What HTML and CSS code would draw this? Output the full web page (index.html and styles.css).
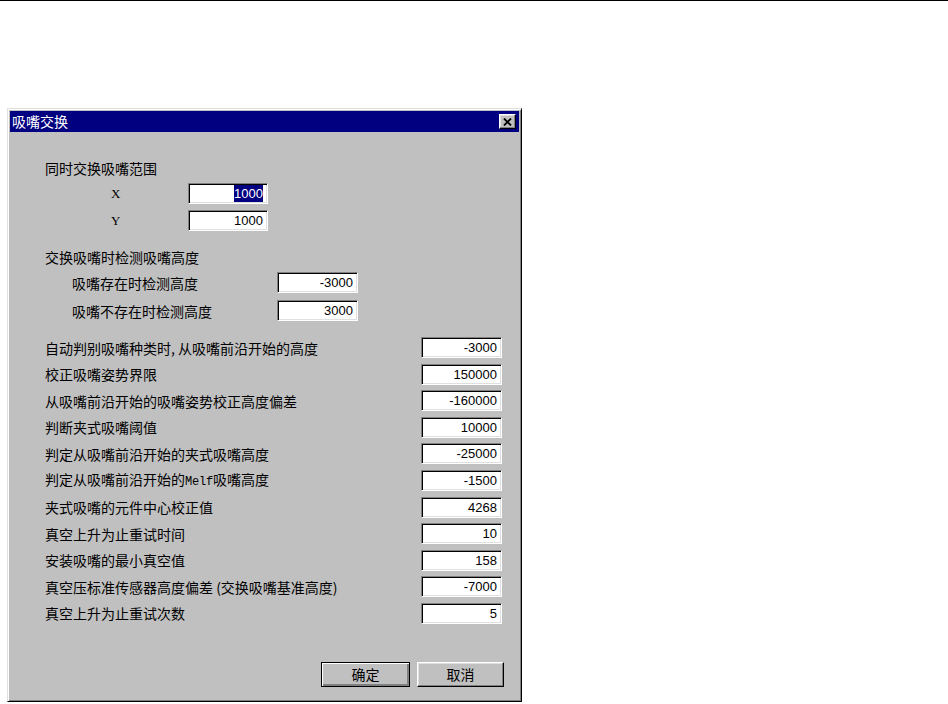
FILE: index.html
```html
<!DOCTYPE html>
<html lang="zh-CN">
<head>
    <meta charset="UTF-8">
    <meta name="viewport" content="width=device-width, initial-scale=1.0">
    <title>吸嘴交换</title>
    <link rel="stylesheet" href="styles.css">
</head>
<body>
    <div class="topline"></div>

    <div class="dialog">
        <div class="titlebar">
            <span class="title">吸嘴交换</span>
            <button class="close" type="button">
                <svg width="9" height="8" viewBox="0 0 9 8">
                    <path d="M1 0.5L8 7.5M8 0.5L1 7.5" stroke="#000" stroke-width="1.8" fill="none"/>
                </svg>
            </button>
        </div>

        <div class="body">
            <div class="group-label">同时交换吸嘴范围</div>
            <div class="rows rows-xy">
                <div class="row">
                    <span class="axis">X</span>
                    <div class="field"><span class="sel">1000</span></div>
                </div>
                <div class="row">
                    <span class="axis">Y</span>
                    <div class="field">1000</div>
                </div>
            </div>

            <div class="group-label second">交换吸嘴时检测吸嘴高度</div>
            <div class="rows rows-detect">
                <div class="row">
                    <span class="label">吸嘴存在时检测高度</span>
                    <div class="field">-3000</div>
                </div>
                <div class="row">
                    <span class="label">吸嘴不存在时检测高度</span>
                    <div class="field">3000</div>
                </div>
            </div>

            <div class="rows rows-params">
                <div class="row">
                    <span class="label">自动判别吸嘴种类时, 从吸嘴前沿开始的高度</span>
                    <div class="field">-3000</div>
                </div>
                <div class="row">
                    <span class="label">校正吸嘴姿势界限</span>
                    <div class="field">150000</div>
                </div>
                <div class="row">
                    <span class="label">从吸嘴前沿开始的吸嘴姿势校正高度偏差</span>
                    <div class="field">-160000</div>
                </div>
                <div class="row">
                    <span class="label">判断夹式吸嘴阈值</span>
                    <div class="field">10000</div>
                </div>
                <div class="row">
                    <span class="label">判定从吸嘴前沿开始的夹式吸嘴高度</span>
                    <div class="field">-25000</div>
                </div>
                <div class="row">
                    <span class="label">判定从吸嘴前沿开始的<span class="mono">Melf</span>吸嘴高度</span>
                    <div class="field">-1500</div>
                </div>
                <div class="row">
                    <span class="label">夹式吸嘴的元件中心校正值</span>
                    <div class="field">4268</div>
                </div>
                <div class="row">
                    <span class="label">真空上升为止重试时间</span>
                    <div class="field">10</div>
                </div>
                <div class="row">
                    <span class="label">安装吸嘴的最小真空值</span>
                    <div class="field">158</div>
                </div>
                <div class="row">
                    <span class="label">真空压标准传感器高度偏差 (交换吸嘴基准高度)</span>
                    <div class="field">-7000</div>
                </div>
                <div class="row">
                    <span class="label">真空上升为止重试次数</span>
                    <div class="field">5</div>
                </div>
            </div>

            <div class="actions">
                <button class="btn default" type="button">确定</button>
                <button class="btn" type="button">取消</button>
            </div>
        </div>
    </div>
</body>
</html>
```

FILE: styles.css
```css
body {
    margin: 0;
    background-color: #fff;
    font-family: "Noto Sans CJK SC", "Liberation Sans", sans-serif;
    font-size: 14px;
    line-height: 16px;
    color: #000;
}
.topline {
    height: 1px;
    background-color: #000;
}
.dialog {
    box-sizing: border-box;
    width: 515px;
    height: 594px;
    margin: 107px 0 0 7px;
    padding: 2px;
    background-color: #c0c0c0;
    border: 1px solid;
    border-color: #dfdfdf #000 #000 #dfdfdf;
    box-shadow: inset 1px 1px #fff, inset -1px -1px #808080;
}
.titlebar {
    height: 21px;
    display: flex;
    align-items: center;
    justify-content: space-between;
    background-color: #000080;
    color: #fff;
    padding: 0 3px 0 2px;
}
.title {
    line-height: 21px;
}
.close {
    box-sizing: border-box;
    width: 17px;
    height: 15px;
    padding: 0;
    display: flex;
    align-items: center;
    justify-content: center;
    background-color: #c0c0c0;
    border: 1px solid;
    border-color: #fff #000 #000 #fff;
    box-shadow: inset -1px -1px #808080, inset 1px 1px #dfdfdf;
}
.body {
    padding: 28px 0 0 35px;
}
.group-label {
    height: 16px;
}
.group-label.second {
    margin-top: 18px;
}
.rows {
    display: grid;
    grid-auto-rows: 21px;
    margin-top: 7px;
}
.row {
    display: grid;
    align-items: center;
}
.rows-xy {
    row-gap: 6px;
    padding-left: 66px;
}
.rows-xy .row {
    grid-template-columns: 77px 80px;
}
.rows-detect {
    row-gap: 7px;
    padding-left: 27px;
}
.rows-detect .row {
    grid-template-columns: 205px 81px;
}
.rows-params {
    row-gap: 5.6px;
    margin-top: 16px;
}
.rows-params .row {
    grid-template-columns: 376px 81px;
}
.label {
    white-space: nowrap;
}
.axis {
    font-family: "Liberation Serif", serif;
    font-size: 13px;
}
.mono {
    font-family: "Liberation Mono", monospace;
    font-size: 12px;
    letter-spacing: -0.2px;
}
.field {
    box-sizing: border-box;
    height: 21px;
    padding-right: 4px;
    background-color: #fff;
    border: 1px solid;
    border-color: #808080 #fff #fff #808080;
    box-shadow: inset 1px 1px #000, inset -1px -1px #dfdfdf;
    font-family: "Liberation Sans", Arial, sans-serif;
    font-size: 13px;
    line-height: 19px;
    text-align: right;
}
.sel {
    background-color: #000080;
    color: #fff;
    padding: 1px 0;
}
.actions {
    display: flex;
    gap: 7px;
    margin: 38px 0 0 276px;
}
.btn {
    box-sizing: border-box;
    width: 87px;
    height: 25px;
    padding: 0;
    font-family: "Noto Sans CJK SC", sans-serif;
    font-size: 14px;
    color: #000;
    background-color: #c0c0c0;
    border: 1px solid;
    border-color: #fff #000 #000 #fff;
    box-shadow: inset -1px -1px #808080, inset 1px 1px #dfdfdf;
}
.btn.default {
    width: 89px;
    border-color: #000;
    box-shadow: inset 1px 1px #fff, inset -2px -2px #808080;
}
```
